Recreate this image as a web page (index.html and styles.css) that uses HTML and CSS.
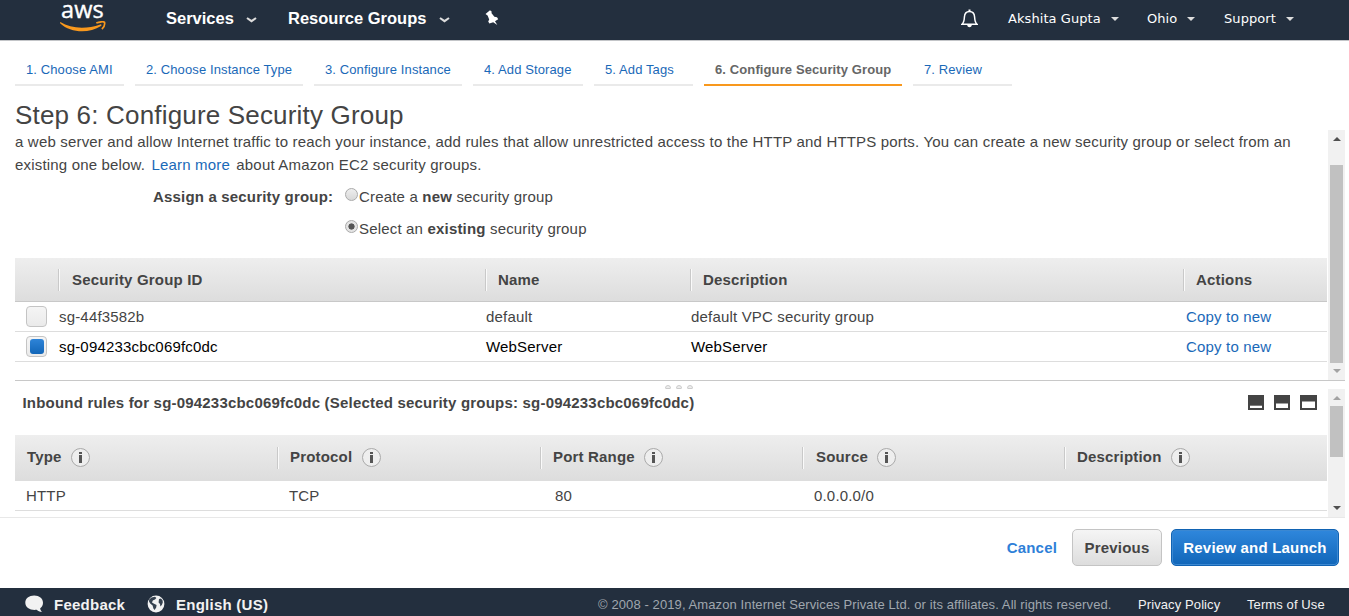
FILE: index.html
```html
<!DOCTYPE html>
<html lang="en">
<head>
<meta charset="utf-8">
<title>Configure Security Group</title>
<link rel="stylesheet" href="styles.css">
</head>
<body>
<div class="app">
  <header class="topbar">
    <div class="logo"><span class="logo-text">aws</span>
      <svg class="smile" width="46" height="11" viewBox="0 0 46 11"><path d="M0.3 1C11 7.6 26 8.4 40.3 3.4C41.4 3 42 4.2 41 4.9C29 12.6 10.5 11.9.3 2.4C0 1.7 0 1.1.3 1Z" fill="#f8981d"/><path d="M36.3 2.1C39.5.6 43.5.5 44.5 1.2C45 3.4 43.6 6.6 41.9 8.2" fill="none" stroke="#f8981d" stroke-width="1.7"/></svg>
    </div>
    <div class="nav nav-services">Services<svg width="11" height="6" viewBox="0 0 11 6"><path d="M1 1L5.5 4.2L10 1" fill="none" stroke="#ddd" stroke-width="2.1"/></svg></div>
    <div class="nav nav-groups">Resource Groups<svg width="11" height="6" viewBox="0 0 11 6"><path d="M1 1L5.5 4.2L10 1" fill="none" stroke="#ddd" stroke-width="2.1"/></svg></div>
    <svg class="pin" width="14" height="16" viewBox="0 0 14 16"><path d="M0.5 4L5 .3L6.8 1.7L6.4 3.1L9.4 6.7L12 7.2L13.2 9.2L10 11.2L12.3 15L8.2 12.2L4.4 13.6L3.2 11.6L4.2 9.6L2.6 5.5Z" fill="#fff"/></svg>
    <svg class="bell" width="17" height="19" viewBox="0 0 17 19"><path d="M1 15.2C3.2 13.3 3.2 11.2 3.4 8C3.6 4.5 5.4 2.5 8.5 2.5S13.4 4.5 13.6 8C13.8 11.2 13.8 13.3 16 15.2Z" fill="none" stroke="#fff" stroke-width="1.5"/><path d="M7.5 2V.6H9.5V2M6.2 16C6.5 19 10.5 19 10.8 16Z" fill="#fff"/></svg>
    <div class="menu menu-user">Akshita Gupta<i class="caret"></i></div>
    <div class="menu menu-region">Ohio<i class="caret"></i></div>
    <div class="menu menu-support">Support<i class="caret"></i></div>
  </header>

  <nav class="steps">
    <a class="step s1"><span>1. Choose AMI</span></a>
    <a class="step s2"><span>2. Choose Instance Type</span></a>
    <a class="step s3"><span>3. Configure Instance</span></a>
    <a class="step s4"><span>4. Add Storage</span></a>
    <a class="step s5"><span>5. Add Tags</span></a>
    <a class="step s6 active"><span>6. Configure Security Group</span></a>
    <a class="step s7"><span>7. Review</span></a>
  </nav>
  <h1>Step 6: Configure Security Group</h1>

  <section class="pane upper">
    <div class="content">
      <p class="intro">a web server and allow Internet traffic to reach your instance, add rules that allow unrestricted access to the HTTP and HTTPS ports. You can create a new security group or select from an<br>existing one below. <a class="learn">Learn more</a> about Amazon EC2 security groups.</p>
      <div class="assign">
        <div class="assign-label">Assign a security group:</div>
        <div class="options">
          <div class="option"><i class="radio"></i><span>Create a <b>new</b> security group</span></div>
          <div class="option"><i class="radio on"></i><span>Select an <b>existing</b> security group</span></div>
        </div>
      </div>
      <div class="groups">
        <div class="g-row g-head"><div></div><div class="th th-id">Security Group ID</div><div class="th">Name</div><div class="th">Description</div><div class="th">Actions</div></div>
        <div class="g-row"><div><i class="check"></i></div><div>sg-44f3582b</div><div>default</div><div>default VPC security group</div><div class="copy">Copy to new</div></div>
        <div class="g-row selected"><div><i class="check on"></i></div><div>sg-094233cbc069fc0dc</div><div>WebServer</div><div>WebServer</div><div class="copy">Copy to new</div></div>
      </div>
    </div>
    <div class="scroll"><i class="arrow up"></i><i class="thumb"></i><i class="arrow down dim"></i></div>
  </section>
  <div class="splitter"><i></i><i></i><i></i></div>
  <section class="pane lower">
    <div class="content">
      <div class="rules-title"><b>Inbound rules for sg-094233cbc069fc0dc (Selected security groups: sg-094233cbc069fc0dc)</b>
        <div class="sizes">
          <svg width="16" height="15" viewBox="0 0 16 15"><path d="M0 0H16V15H0Z" fill="#444"/><path d="M2 10.7H14V13H2Z" fill="#fff"/></svg>
          <svg width="16" height="15" viewBox="0 0 16 15"><path d="M0 0H16V15H0Z" fill="#444"/><path d="M2 8.5H14V13H2Z" fill="#fff"/></svg>
          <svg width="17" height="15" viewBox="0 0 17 15"><path d="M0 0H17V15H0Z" fill="#444"/><path d="M2 6.5H15V13H2Z" fill="#fff"/></svg>
        </div>
      </div>
      <div class="rules">
        <div class="r-row r-head">
          <div class="th"><span>Type</span><i class="info"></i></div><div class="th"><span>Protocol</span><i class="info"></i></div><div class="th"><span>Port Range</span><i class="info"></i></div><div class="th th-source"><span>Source</span><i class="info"></i></div><div class="th"><span>Description</span><i class="info"></i></div>
        </div>
        <div class="r-row"><div class="type">HTTP</div><div>TCP</div><div class="port">80</div><div>0.0.0.0/0</div><div></div></div>
      </div>
    </div>
    <div class="scroll"><i class="arrow up dim"></i><i class="thumb"></i><i class="arrow down"></i></div>
  </section>

  <div class="actions"><a class="cancel">Cancel</a><button class="btn">Previous</button><button class="btn primary">Review and Launch</button></div>

  <footer class="footer">
    <svg class="bubble" width="19" height="18" viewBox="0 0 19 18"><path d="M9.2.5C14.3.5 18 3.6 18 7.7C18 10 16.9 12 15.2 13.2C15.3 14.8 16 16 17 17C14.8 17 12.7 16 11.6 14.8C5.5 15.6.3 12.6.3 7.7C.3 3.6 4 .5 9.2.5Z" fill="#f2f2f2"/></svg>
    <b class="feedback">Feedback</b>
    <svg class="globe" width="18" height="18" viewBox="0 0 18 18"><circle cx="9" cy="9" r="8.4" fill="#f2f2f2"/><path d="M2.2 4.6L4.5 2.6L8 1.8L9.4 3L8 4.6L5.8 5.6L5 7.4L6.6 8.6L9.6 10L9.2 12.4L7.6 15L6.4 13.4L5.6 10.6L3.2 8.6L2 6.6ZM12 4L14 3.4L15.6 5.6L15.8 7.6L14.8 10L13.4 11.4L13 9L11.6 7.4Z" fill="#35414f"/></svg>
    <b class="language">English (US)</b>
    <span class="copyright">© 2008 - 2019, Amazon Internet Services Private Ltd. or its affiliates. All rights reserved.</span>
    <span class="privacy">Privacy Policy</span>
    <span class="terms">Terms of Use</span>
  </footer>
</div>
</body>
</html>
```
FILE: styles.css
```css
* { box-sizing: border-box; }
body { margin: 0; background: #fff; color: #444; font: 15px "Liberation Sans", Arial, sans-serif; letter-spacing: 0.178px; }
i { display: block; flex: none; }
svg { display: block; flex: none; }
.app { width: 1349px; height: 616px; overflow: hidden; display: flex; flex-direction: column; white-space: nowrap; }
.app > * { flex: none; }

.topbar { height: 41px; background: #232f3e; border-bottom: 1px solid #c3c5c8; display: flex; align-items: center; padding-left: 60px; color: #fff; letter-spacing: 0; }
.logo { width: 46px; height: 40px; margin-right: 60px; }
.logo-text { display: block; height: 21px; padding-left: 1px; font: 23.5px/19px "Open Sans", "Noto Sans", sans-serif; letter-spacing: 0.1px; -webkit-text-stroke: 0.4px #fff; }
.nav { display: flex; align-items: center; font-size: 16.5px; font-weight: bold; height: 36px; margin-bottom: 4px; }
.nav svg { margin-top: 3px; }
.nav-services { width: 122px; }
.nav-services svg { margin-left: 12px; }
.nav-groups { width: 197px; }
.nav-groups svg { margin-left: 13px; }
.pin { margin-bottom: 5px; }
.bell { margin: 0 30px 4px 462px; }
.menu { display: flex; align-items: center; height: 36px; margin-bottom: 4px; font: 13px "DejaVu Sans", Verdana, sans-serif; letter-spacing: 0.07px; }
.menu-user { width: 139px; }
.menu-region { width: 77px; }
.caret { margin: 2px 0 0 10px; border: 4px solid transparent; border-top-color: #ddd; border-bottom: 0; }

.steps { height: 45px; display: flex; gap: 11px; padding-left: 15px; }
.step { height: 45px; border-bottom: 2px solid #eaeaea; color: #1a69b8; font-size: 13px; line-height: 57px; padding-left: 11px; letter-spacing: 0.11px; }
.s1 { width: 109px; } .s2 { width: 168px; } .s3 { width: 148px; } .s4 { width: 110px; } .s5 { width: 99px; } .s6 { width: 198px; } .s7 { width: 99px; }
.step.active { border-color: #f8981d; color: #666; font-weight: bold; }
h1 { margin: 0; padding: 14px 0 0 15px; height: 44px; font-size: 26px; line-height: 30px; font-weight: normal; }

.pane { display: flex; padding-left: 15px; width: 1345px; }
.pane .content { width: 1312px; margin-right: 1px; }
.upper { height: 250px; }
.lower { height: 129px; border-bottom: 1px solid #e8e8e8; }
.intro { margin: 0; height: 47px; line-height: 23px; }
.learn { color: #1a69b8; margin: 0 2px; }
.assign { display: flex; height: 81px; padding: 4px 0 0 138px; line-height: 32px; }
.assign-label { width: 192px; font-weight: bold; }
.option { display: flex; height: 32px; }
.radio { width: 13px; height: 13px; margin: 7px 1px 0 0; border: 1px solid #aaa; border-radius: 50%; background: linear-gradient(#eee, #d8d8d8); }
.radio.on { background: radial-gradient(circle, #555 0 2.8px, #e4e4e4 3.4px); }
.g-row { display: grid; grid-template-columns: 44px 427px 205px 495px 141px; height: 30px; align-items: center; border-bottom: 1px solid #ddd; }
.g-head, .r-head { background: linear-gradient(#eee, #ddd); border-bottom: 1px solid #c8c8c8; font-weight: bold; }
.g-head { height: 44px; grid-template-columns: 43px 427px 205px 493px 144px; }
.th { display: flex; align-items: center; height: 22px; padding-left: 12px; border-left: 1px solid #c9c9c9; box-shadow: inset 1px 0 #fafafa; }
.copy, .selected .copy { color: #1a69b8; }
.selected { color: #000; }
.check { width: 21px; height: 21px; margin-left: 11px; border: 1px solid #c4c4c4; border-radius: 4px; background: linear-gradient(#f5f5f5, #eaeaea); padding: 2px 3px; }
.check.on::before { content: ""; display: block; width: 14px; height: 15px; border-radius: 3px; background: linear-gradient(#2e84d8, #1266b8); }

.scroll { width: 17px; background: #f1f1f1; display: flex; flex-direction: column; align-items: center; }
.arrow { width: 0; border: 4px solid transparent; }
.up { border-top: 0; border-bottom-color: #505050; margin-top: 7px; }
.down { border-bottom: 0; border-top-color: #505050; margin-top: auto; margin-bottom: 7px; }
.up.dim { border-bottom-color: #a3a3a3; }
.down.dim { border-top-color: #a3a3a3; }
.thumb { width: 13px; background: #c1c1c1; }
.upper .thumb { height: 198px; margin-top: 24px; }
.lower .thumb { height: 51px; margin-top: 6px; }
.splitter { height: 9px; width: 1330px; margin-left: 15px; border-top: 1px solid #c8c8c8; display: flex; justify-content: center; gap: 5px; padding: 4px 3px 0 0; }
.splitter i { width: 6px; height: 4px; border: 1px solid #ccc; border-radius: 3px 3px 1px 1px; background: #eee; }

.rules-title { height: 46px; display: flex; justify-content: space-between; padding: 6px 10px 0 7.5px; line-height: 15px; letter-spacing: 0.2px; }
.sizes { display: flex; gap: 10px; }
.r-row { display: grid; grid-template-columns: 262px 263px 262px 262px 263px; height: 30px; align-items: center; border-bottom: 1px solid #ddd; }
.r-row > div { padding-left: 12px; }
.r-head { height: 46px; }
.r-head span { padding-bottom: 2px; }
.r-row .th:first-child { border: 0; box-shadow: none; }
.r-row > .type { padding-left: 11px; }
.r-row > .port { padding-left: 15px; }
.g-row > .th-id, .r-row > .th-source { padding-left: 13px; }
.info { width: 19px; height: 19px; margin-left: 9.5px; border: 1.5px solid #aaa; border-radius: 50%; background: linear-gradient(#555, #555) 7px 3px / 3px 2px no-repeat, linear-gradient(#555, #555) 7px 6px / 3px 8px no-repeat, #eee; }

.actions { height: 70px; padding: 11px 10px 0 0; display: flex; justify-content: flex-end; }
.cancel { color: #2e7fd8; font-weight: bold; line-height: 37px; margin-right: 15px; }
.btn { width: 90px; height: 37px; padding: 0; border: 1px solid #c4c4c4; border-radius: 5px; background: linear-gradient(#f5f5f5, #ddd); color: #444; font: bold 15px "Liberation Sans", Arial, sans-serif; letter-spacing: 0.2px; }
.primary { width: 168px; margin-left: 9px; border-color: #1163b3; background: linear-gradient(#2f87dc, #1166b9); box-shadow: inset 0 0 0 1px #3b88d2; color: #fff; }
.footer { height: 28px; padding: 4px 0 0 25px; background: #232f3e; color: #f2f2f2; display: flex; align-items: center; }
.feedback { width: 93px; margin-left: 10px; letter-spacing: 0.25px; }
.language { width: 422px; margin-left: 11px; letter-spacing: 0.25px; }
.copyright { width: 540px; color: #a0a7ae; font-size: 13px; letter-spacing: 0.1px; }
.privacy { width: 109px; font-size: 13px; letter-spacing: 0.1px; }
.terms { font-size: 13px; letter-spacing: 0.1px; }
```
